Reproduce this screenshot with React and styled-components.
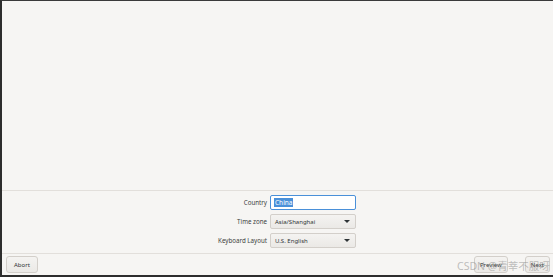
import React from 'react'
import styled, { createGlobalStyle } from 'styled-components'

const Global = createGlobalStyle`
  html, body { margin: 0; padding: 0; background: #f6f5f4; }
  #root { width: 553px; height: 277px; }
`

const Frame = styled.div`
  box-sizing: border-box;
  width: 553px;
  height: 277px;
  border-left: 2px solid #2d2d2d;
  border-top: 1px solid #3a3a3a;
  border-bottom: 2px solid #2d2d2d;
  background: #f6f5f3;
  display: flex;
  flex-direction: column;
  font-family: "Noto Sans", "DejaVu Sans", sans-serif;
  color: #2e3436;
  position: relative;
`

const Content = styled.div`
  flex: 1;
  border-bottom: 1px solid #e2dfdb;
`

const Form = styled.div`
  display: grid;
  grid-template-columns: 265px 86px;
  column-gap: 3px;
  row-gap: 4px;
  align-items: center;
  padding: 4px 0 5px;
  height: 53px;
  border-bottom: 1px solid #e2dfdb;
`

const Label = styled.div`
  font-size: 6.2px;
  text-align: right;
  color: #3b3e40;
`

const Entry = styled.div`
  box-sizing: border-box;
  height: 15px;
  background: #fff;
  border: 1px solid #4a90d9;
  border-radius: 2px;
  display: flex;
  align-items: center;
  padding-left: 3px;
  font-size: 6.5px;
`

const Selected = styled.span`
  background: #4a90d9;
  color: #fff;
  padding: 0 1px;
`

const Combo = styled.div`
  box-sizing: border-box;
  height: 15px;
  background: linear-gradient(#f4f3f1, #ebe9e6);
  border: 1px solid #d3cfca;
  border-radius: 2px;
  display: flex;
  align-items: center;
  justify-content: space-between;
  padding: 0 5px 0 4px;
  font-size: 6px;
  color: #2e3436;
`

const Arrow = styled.span`
  width: 0;
  height: 0;
  border-left: 3px solid transparent;
  border-right: 3px solid transparent;
  border-top: 3px solid #2e3436;
`

const Bar = styled.div`
  height: 21px;
  display: flex;
  align-items: center;
  padding: 0 3px 0 4px;
`

const Button = styled.button`
  box-sizing: border-box;
  height: 17px;
  padding: 0 ${p => p.$pad || 6}px;
  font-family: "Noto Sans", "DejaVu Sans", sans-serif;
  font-size: 6px;
  color: #2e3436;
  background: linear-gradient(#f4f3f1, #ebe9e6);
  border: 1px solid #d3cfca;
  border-radius: 3px;
  margin-left: ${p => p.$gap || 0}px;
`

const Spacer = styled.div`
  flex: 1;
`

const Watermark = styled.div`
  position: absolute;
  left: 455px;
  top: 257px;
  font-family: "Noto Sans", "Noto Sans CJK SC", sans-serif;
  font-size: 10.5px;
  color: rgba(130, 130, 130, 0.5);
  white-space: nowrap;
  pointer-events: none;
`

export default function App() {
  return (
    <>
      <Global />
      <Frame>
        <Content />
        <Form>
          <Label>Country</Label>
          <Entry><Selected>China</Selected></Entry>
          <Label>Time zone</Label>
          <Combo>Asia/Shanghai<Arrow /></Combo>
          <Label>Keyboard Layout</Label>
          <Combo>U.S. English<Arrow /></Combo>
        </Form>
        <Bar>
          <Button $pad={7}>Abort</Button>
          <Spacer />
          <Button $pad={5}>Preview</Button>
          <Button $pad={5} $gap={17}>Next</Button>
        </Bar>
        <Watermark>CSDN @青莘不服呀</Watermark>
      </Frame>
    </>
  )
}
